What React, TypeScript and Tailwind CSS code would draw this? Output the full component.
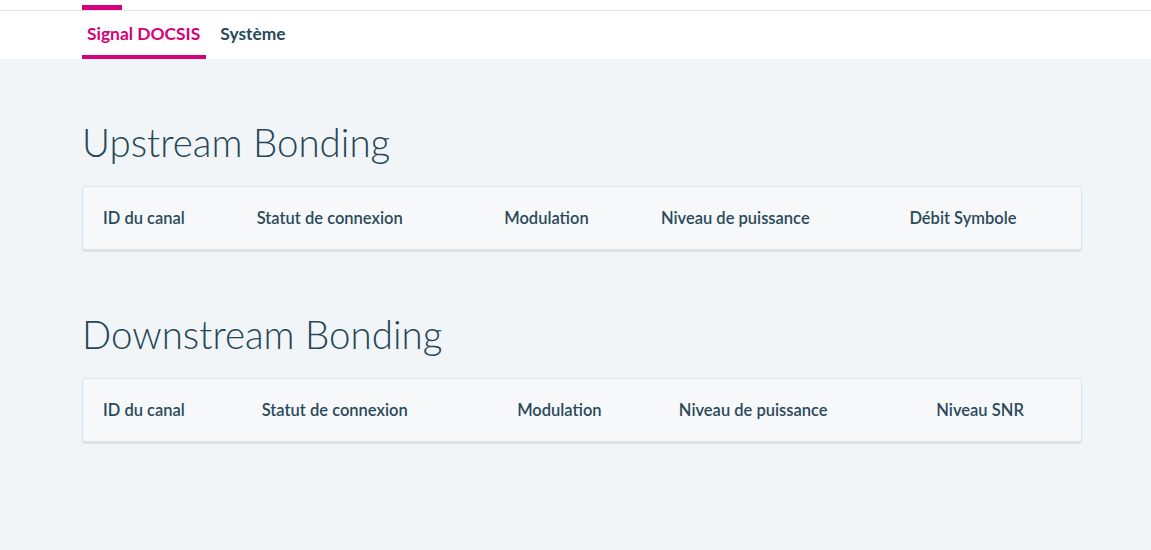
import React from "react";

const up = [
  { label: "ID du canal", w: "w-[154px]" },
  { label: "Statut de connexion", w: "w-[248px]" },
  { label: "Modulation", w: "w-[157px]" },
  { label: "Niveau de puissance", w: "w-[249px]" },
  { label: "Débit Symbole", w: "w-[192px]" },
];
const down = [
  { label: "ID du canal", w: "w-[159px]" },
  { label: "Statut de connexion", w: "w-[256px]" },
  { label: "Modulation", w: "w-[162px]" },
  { label: "Niveau de puissance", w: "w-[258px]" },
  { label: "Niveau SNR", w: "w-[165px]" },
];

function Table({ cols }: { cols: { label: string; w: string }[] }) {
  return (
    <div className="w-[1000px] h-[64px] bg-[#f6f8fa] border border-[#d9e4ea] rounded-[3px] shadow-[0_2px_1px_rgba(0,0,0,0.08)] flex items-center">
      {cols.map((c) => (
        <div key={c.label} className={`${c.w} pl-[20px] text-[16.5px] font-semibold text-[#2a4a5a]`}>
          {c.label}
        </div>
      ))}
    </div>
  );
}

export default function App() {
  return (
    <div className="w-[1151px] h-[550px] bg-[#f1f5f8] font-['Lato','Open_Sans',sans-serif] overflow-hidden">
      <div className="h-[10px] bg-white pl-[82px] pt-[5px]">
        <div className="w-[40px] h-[5px] bg-[#d6007a]" />
      </div>
      <div className="h-[49px] bg-white border-t border-[#e2e2e2] flex pl-[82px] gap-[4px]">
        <div className="pl-[5px] pr-[6px] flex items-center h-full border-b-[4px] border-[#d6007a] text-[#d6007a] text-[17.4px] font-bold pt-[3px]">
          Signal DOCSIS
        </div>
        <div className="px-[10px] flex items-center h-full border-b-[4px] border-transparent text-[#2a4a5a] text-[17.4px] font-bold pt-[3px]">
          Système
        </div>
      </div>
      <div className="pl-[82px]">
        <h2 className="mt-[59px] text-[38.5px] leading-[48px] font-light text-[#244757]">Upstream Bonding</h2>
        <div className="mt-[20px]">
          <Table cols={up} />
        </div>
        <h2 className="mt-[60px] text-[38.5px] leading-[48px] font-light text-[#244757]">Downstream Bonding</h2>
        <div className="mt-[20px]">
          <Table cols={down} />
        </div>
      </div>
    </div>
  );
}
